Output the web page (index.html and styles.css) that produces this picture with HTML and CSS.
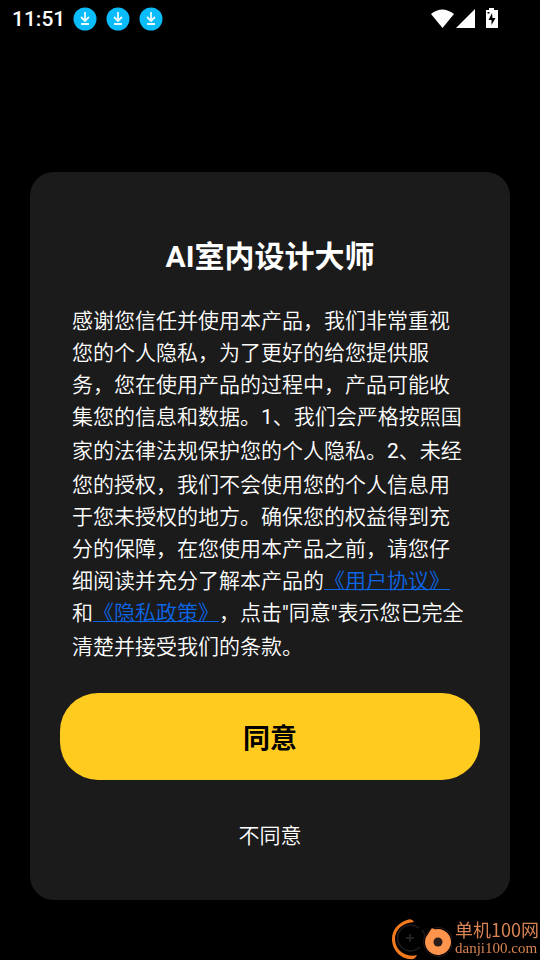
FILE: index.html
```html
<!DOCTYPE html>
<html lang="zh-CN">
<head>
<meta charset="utf-8">
<meta name="viewport" content="width=device-width, initial-scale=1">
<title>AI室内设计大师</title>
<link rel="stylesheet" href="styles.css">
</head>
<body>
<svg class="defs" aria-hidden="true">
  <symbol id="download" viewBox="0 0 24 24">
    <circle cx="12" cy="12" r="11.5" fill="#0bbcfb"/>
    <path d="M12 5v9M8 10l4 4 4-4M8 17h8" fill="none" stroke="#e8faff" stroke-width="1.800"/>
  </symbol>
</svg>
<header class="status">
  <time class="clock">11:51</time>
  <div class="notices">
    <svg class="notice"><use href="#download"/></svg>
    <svg class="notice"><use href="#download"/></svg>
    <svg class="notice"><use href="#download"/></svg>
  </div>
  <svg class="signals" viewBox="0 0 68 22" fill="#fff" aria-hidden="true">
    <path d="M0 6Q11-3 23 6L11.500 20z"/>
    <path d="M44 1v19H25z"/>
    <path fill-rule="evenodd" d="M58 2V0h5v2h4v18H55V2zM61 5L57.500 12h3V17L64.500 10h-3zM56.500 4v1.500h2V4z"/>
  </svg>
</header>
<main class="dialog">
  <h1 class="title">AI室内设计大师</h1>
  <p class="terms">感谢您信任并使用本产品，我们非常重视您的个人隐私，为了更好的给您提供服务，您在使用产品的过程中，产品可能收集您的信息和数据。<span class="latin">1</span>、我们会严格按照国家的法律法规保护您的个人隐私。<span class="latin">2</span>、未经您的授权，我们不会使用您的个人信息用于您未授权的地方。确保您的权益得到充分的保障，在您使用本产品之前，请您仔细阅读并充分了解本产品的<a href="#agreement">《用户协议》</a>和<a href="#privacy">《隐私政策》</a>，点击<span class="latin">"</span>同意<span class="latin">"</span>表示您已完全清楚并接受我们的条款。</p>
  <button class="agree" type="button">同意</button>
  <button class="decline" type="button">不同意</button>
</main>
<aside class="watermark">
  <svg class="mark" viewBox="0 0 62 44" aria-hidden="true">
    <path d="M29 12A13 13 0 1 0 30 31" fill="none" stroke="#201c1d" stroke-width="1.500"/>
    <path d="M20 18v8M16 22h8" stroke="#2b2829" stroke-width="1.500"/>
    <path d="M32 14Q36 18 34 26" fill="none" stroke="#201c1d" stroke-width="1.500"/>
    <path d="M24 6Q22 2 17 4C8 7 2 14 2 23c0 11 9 20 18 20q5 1 7-4C15 42 5 34 5 23 5 14 12 7 24 6z" fill="#f47a1e"/>
    <circle cx="48" cy="26" r="14.5" fill="#000" stroke="#2a1b17"/>
    <path d="M36 21L42 12Q44 14 48 13A13 13 0 1 1 36 21z" fill="#ff944c"/>
    <circle cx="48" cy="26" r="4.500" fill="#2a1c18"/>
  </svg>
  <div class="site">
    <span class="site-name">单机100网</span>
    <span class="site-url">danji100.com</span>
  </div>
</aside>
</body>
</html>
```
FILE: styles.css
```css
* {
  box-sizing: border-box;
}

body {
  margin: 0;
  min-height: 100vh;
  background: #000;
  color: #fff;
  font-family: Roboto, "Noto Sans CJK SC", sans-serif;
  text-spacing-trim: space-all;
}

.defs {
  display: none;
}

.status {
  display: flex;
  align-items: center;
  height: 37px;
  padding: 0 41px 0 12px;
}

.clock {
  font-size: 21px;
  font-weight: 500;
}

.notices {
  display: flex;
  gap: 9px;
  margin-left: 8px;
}

.notice {
  width: 24px;
  height: 24px;
}

.signals {
  width: 68px;
  height: 22px;
  margin-left: auto;
}

.dialog {
  display: flex;
  flex-direction: column;
  margin: 135px 30px 60px;
  padding: 62px 30px 42px;
  border-radius: 24px;
  background: #1b1b1b;
}

.title {
  margin: 0 0 25px;
  font-size: 30px;
  font-weight: 700;
  line-height: 46px;
  text-align: center;
}

.terms {
  margin: 0;
  padding: 0 12px;
  font-size: 21px;
  font-weight: 350;
  line-height: 32px;
}

.terms a {
  color: #0d66e8;
  text-decoration: underline;
  text-decoration-thickness: 1px;
}

.latin {
  display: inline-block;
  margin-bottom: 2px;
  font-weight: 400;
}

.agree,
.decline {
  border: 0;
  font-family: inherit;
  cursor: pointer;
}

.agree {
  height: 87px;
  margin-top: 30px;
  border-radius: 38px;
  background: #ffcb1f;
  color: #000;
  font-size: 27px;
  font-weight: 700;
}

.decline {
  height: 48px;
  margin-top: 30px;
  background: none;
  color: #fff;
  font-size: 21px;
  font-weight: 350;
}

.watermark {
  position: fixed;
  right: 1px;
  bottom: 0;
  display: flex;
  align-items: center;
  gap: 3px;
  color: #d98352;
}

.mark {
  width: 62px;
  height: 44px;
}

.site {
  display: flex;
  flex-direction: column;
}

.site-name {
  font-family: "Noto Sans CJK SC", sans-serif;
  font-size: 18px;
  line-height: 20px;
}

.site-url {
  font-family: "Liberation Serif", serif;
  font-size: 15px;
  line-height: 18px;
}
```
